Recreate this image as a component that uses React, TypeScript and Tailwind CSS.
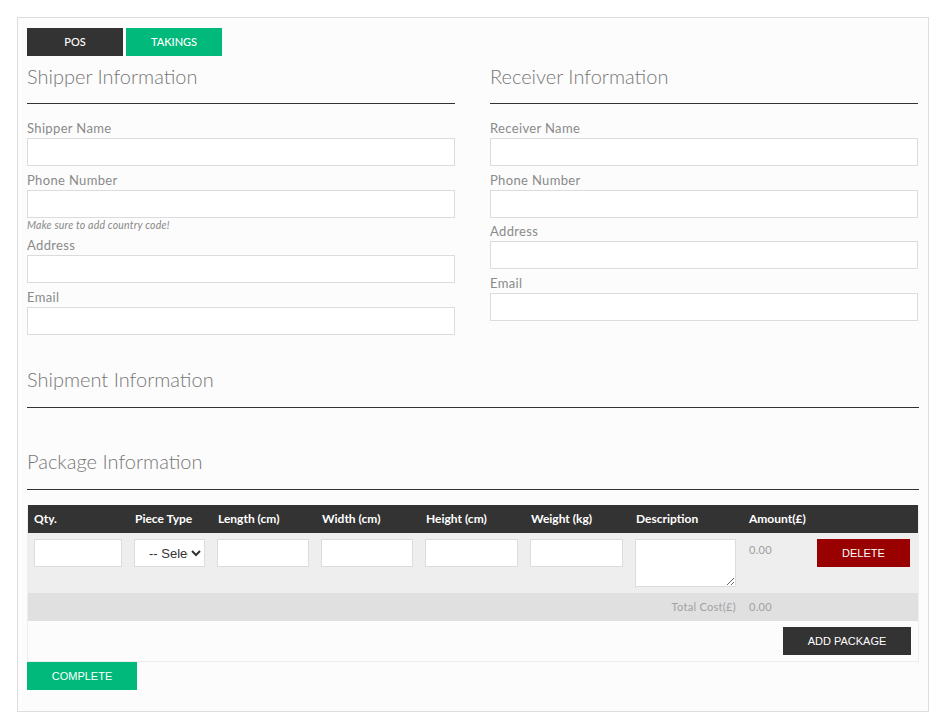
import React from "react";

const font = { fontFamily: "Lato, 'Open Sans', sans-serif" };

function Field({ label, hint }: { label: string; hint?: string }) {
  return (
    <div className="mb-[4px]">
      <div className="h-[20px] text-[13px] leading-[20px] tracking-[0.35px] text-[#8a8a8a]">{label}</div>
      <input className="block h-[28px] w-full border border-[#dcdcdc] bg-white outline-none" />
      {hint && (
        <div className="mt-[1px] mb-[1px] h-[12px] text-[10.5px] italic leading-[12px] tracking-[0.2px] text-[#888]">{hint}</div>
      )}
    </div>
  );
}

function Heading({ text, className }: { text: string; className?: string }) {
  return (
    <div className={"border-b border-[#333] pb-[16px] " + (className ?? "")}>
      <h2 className="h-[24px] text-[20px] font-light leading-[24px] text-[#777]">{text}</h2>
    </div>
  );
}

const cols = "grid grid-cols-[100px_83px_104px_104px_105px_105px_113px_69px_1fr]";

export default function App() {
  return (
    <div className="min-h-screen bg-white pt-[17px]" style={font}>
      <div className="ml-[17px] w-[912px] border border-[#dddddd] bg-[#fcfcfc] px-[9px] pt-[10px] pb-[21px]">
        <div className="flex gap-[3px]">
          <button className="h-[28px] w-[96px] bg-[#333] text-[11px] font-medium text-white">POS</button>
          <button className="h-[28px] w-[96px] bg-[#00b97a] text-[11px] font-medium text-white">TAKINGS</button>
        </div>

        <div className="grid grid-cols-[428px_428px] gap-x-[35px]">
          <div>
            <Heading text="Shipper Information" className="mt-[8px] mb-[14px] !pb-[15px]" />
            <Field label="Shipper Name" />
            <Field label="Phone Number" hint="Make sure to add country code!" />
            <Field label="Address" />
            <Field label="Email" />
          </div>
          <div>
            <Heading text="Receiver Information" className="mt-[8px] mb-[14px] !pb-[15px]" />
            <Field label="Receiver Name" />
            <Field label="Phone Number" />
            <div className="-mt-[1px]">
              <Field label="Address" />
              <Field label="Email" />
            </div>
          </div>
        </div>

        <Heading text="Shipment Information" className="mt-[28px]" />
        <Heading text="Package Information" className="mt-[41px]" />

        <div className="mt-[15px] border border-[#eeeeee] border-t-0">
          <div className={cols + " h-[28px] items-center bg-[#333] text-[12px] font-bold text-white"}>
            <div className="pl-[6px]">Qty.</div>
            <div className="pl-[7px]">Piece Type</div>
            <div className="pl-[7px]">Length (cm)</div>
            <div className="pl-[7px]">Width (cm)</div>
            <div className="pl-[7px]">Height (cm)</div>
            <div className="pl-[7px]">Weight (kg)</div>
            <div className="pl-[7px]">Description</div>
            <div className="pl-[7px]">Amount(£)</div>
            <div />
          </div>
          <div className={cols + " items-start bg-[#eeeeee] py-[6px]"}>
            <div className="px-[6px]">
              <input className="block h-[28px] w-full border border-[#dcdcdc] bg-white outline-none" />
            </div>
            <div className="px-[6px]">
              <select
                className="block h-[28px] w-[71px] border border-[#dcdcdc] bg-white pl-[10px] text-[13px] text-[#333] outline-none"
                style={{ fontFamily: "'Liberation Sans', Arial, sans-serif" }}
              >
                <option>-- Select --</option>
              </select>
            </div>
            <div className="px-[6px]">
              <input className="block h-[28px] w-full border border-[#dcdcdc] bg-white outline-none" />
            </div>
            <div className="px-[6px]">
              <input className="block h-[28px] w-full border border-[#dcdcdc] bg-white outline-none" />
            </div>
            <div className="px-[6px]">
              <input className="block h-[28px] w-full border border-[#dcdcdc] bg-white outline-none" />
            </div>
            <div className="px-[6px]">
              <input className="block h-[28px] w-full border border-[#dcdcdc] bg-white outline-none" />
            </div>
            <div className="px-[6px]">
              <textarea className="block h-[48px] w-full border border-[#dcdcdc] bg-white outline-none" />
            </div>
            <div className="pl-[7px] pt-[3px] text-[11px] tracking-[0.3px] text-[#a0a0a0]">0.00</div>
            <div className="pl-[6px] pr-[8px]">
              <button
                className="h-[28px] w-full bg-[#990000] text-[11px] text-white"
                style={{ fontFamily: "'Liberation Sans', Arial, sans-serif" }}
              >
                DELETE
              </button>
            </div>
          </div>
          <div className={cols + " h-[28px] items-center bg-[#e0e0e0] text-[11px] tracking-[0.3px] text-[#a0a0a0]"}>
            <div className="col-span-7 pr-[6px] text-right">Total Cost(£)</div>
            <div className="pl-[7px]">0.00</div>
            <div />
          </div>
          <div className="flex h-[40px] items-center justify-end bg-[#fcfcfc] pr-[7px]">
            <button
              className="h-[28px] w-[128px] bg-[#333] text-[11px] text-white"
              style={{ fontFamily: "'Liberation Sans', Arial, sans-serif" }}
            >
              ADD PACKAGE
            </button>
          </div>
        </div>

        <button
          className="h-[28px] w-[110px] bg-[#00b97a] text-[11px] text-white"
          style={{ fontFamily: "'Liberation Sans', Arial, sans-serif" }}
        >
          COMPLETE
        </button>
      </div>
    </div>
  );
}
